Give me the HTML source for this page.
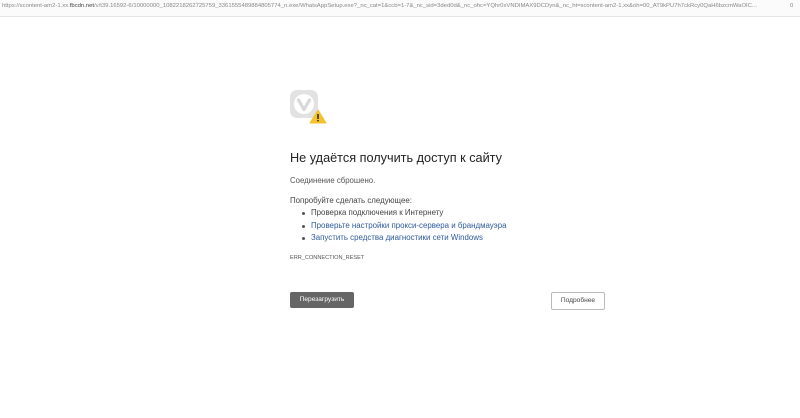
<!DOCTYPE html>
<html><head><meta charset="utf-8"><style>
body{margin:0;width:800px;height:418px;background:#fff;position:relative;overflow:hidden;font-family:"Liberation Sans","Noto Sans CJK SC",sans-serif;}
.bar{position:absolute;left:0;top:0;width:800px;height:16px;border-bottom:1px solid #e4e4e4;background:#fbfbfb;font-size:5.9px;color:#888;white-space:nowrap;overflow:hidden;line-height:13px;padding-left:2px;}
.bar b{color:#444;font-weight:normal}
.t{position:absolute;white-space:nowrap;}
.li{position:absolute;left:311px;font-size:7.9px;white-space:nowrap;}
.dot{position:absolute;left:302px;width:3px;height:3px;border-radius:50%;background:#555;}
</style></head><body>
<div class="bar">https://scontent-am2-1.xx.<b>fbcdn.net</b>/v/t39.16592-6/10000000_1082218262725759_3361555489884805774_n.exe/WhatsAppSetup.exe?_nc_cat=1&amp;ccb=1-7&amp;_nc_sid=3ded0d&amp;_nc_ohc=YQhr0xVNDIMAX9DCDyn&amp;_nc_ht=scontent-am2-1.xx&amp;oh=00_AT9kPU7h7ckRcy0QaH6bzcmWaOIC...<span style="position:absolute;left:790px">0</span></div>
<svg style="position:absolute;left:289px;top:89px" width="40" height="36">
<rect x="1" y="1" width="28" height="28" rx="7" fill="#e2e2e2"/>
<circle cx="15" cy="15" r="10" fill="#fff"/>
<path d="M9.5 11 L15 20.5 L20.5 11" stroke="#d8d8d8" stroke-width="3.2" fill="none" stroke-linecap="round" stroke-linejoin="round"/>
<path d="M29 21 L37 34 L21 34 Z" fill="#f3c22c" stroke="#f3c22c" stroke-width="1" stroke-linejoin="round"/>
<rect x="28.2" y="25" width="1.6" height="5" fill="#333"/><rect x="28.2" y="31" width="1.6" height="1.4" fill="#333"/>
</svg>
<div class="t" style="left:290px;top:151px;font-size:12.7px;color:#222;">Не удаётся получить доступ к сайту</div>
<div class="t" style="left:290px;top:176px;font-size:7.8px;color:#555;">Соединение сброшено.</div>
<div class="t" style="left:290px;top:196px;font-size:7.9px;color:#444;">Попробуйте сделать следующее:</div>
<div class="dot" style="top:212px"></div><div class="li" style="top:208px;color:#444">Проверка подключения к Интернету</div>
<div class="dot" style="top:225px"></div><div class="li" style="top:221px;color:#2f5a9c">Проверьте настройки прокси-сервера и брандмауэра</div>
<div class="dot" style="top:237px"></div><div class="li" style="top:233px;color:#2f5a9c">Запустить средства диагностики сети Windows</div>
<div class="t" style="left:290px;top:255px;font-size:5.6px;color:#555;">ERR_CONNECTION_RESET</div>
<div class="t" style="left:290px;top:292px;width:64px;height:16px;background:#666;border-radius:2px;color:#fff;font-size:6.6px;line-height:16px;text-align:center;">Перезагрузить</div>
<div class="t" style="left:551px;top:292px;width:52px;height:16px;border:1px solid #bbb;border-radius:2px;color:#444;font-size:6.6px;line-height:16px;text-align:center;">Подробнее</div>
</body></html>
